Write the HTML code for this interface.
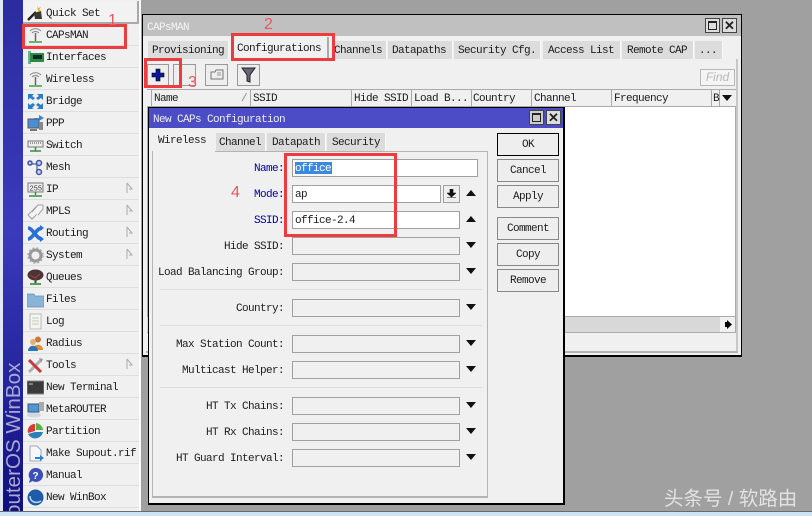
<!DOCTYPE html>
<html><head><meta charset="utf-8">
<style>
html,body{margin:0;padding:0;width:812px;height:516px;overflow:hidden;background:#a0a0a0}
div,span,svg{position:absolute;box-sizing:border-box}
.t{font:11px/14px "Liberation Mono",monospace;letter-spacing:-.6px;white-space:pre;color:#1c1c1c;margin-top:1px}
.m{left:46px}
.r{border-bottom:1px solid #dedede;left:23px;width:116px;height:22px}
.i{left:27px;width:17px;height:17px}
.a{left:126px;width:7px;height:12px}
.tab{background:#dcdcdc;border-right:1px solid #f8f8f8;height:18px}
.red{border:3px solid #ec3c40;z-index:20}
.n{font:16px/18px "Liberation Sans",sans-serif;color:#e8585c;z-index:21}
.f{background:#f0f0f0;border:1px solid #a0a0a0;height:18px;left:292px;width:168px}
.w{background:#fff}
.l{right:528px;text-align:right}
.b{color:#0000a8}
.d{left:466px;width:0;height:0;border-left:5px solid transparent;border-right:5px solid transparent;border-top:6px solid #111}
.u{left:466px;width:0;height:0;border-left:5px solid transparent;border-right:5px solid transparent;border-bottom:6px solid #111}
.btn{left:497px;width:62px;height:23px;background:#eee;border:1px solid #888;text-align:center;font:11px/23px "Liberation Mono",monospace;letter-spacing:-.6px;color:#1c1c1c}
.sep{left:160px;width:322px;height:1px;background:#dedede}
.h{top:90px;height:16px;border-right:1px solid #a8a8a8}
.wb{width:15px;height:15px;background:#ddd;border:1px solid #444}
</style></head><body>

<!-- sidebar -->
<div style="left:0;top:0;width:3px;height:512px;background:#dfe8f4"></div>
<div style="left:3px;top:0;width:20px;height:512px;background:linear-gradient(#2c2ca0,#3a3abc 45%,#24249c 75%,#10107e)"></div>
<div style="left:13px;top:516px;width:0;height:0"><span style="font:20.6px/24px 'Liberation Sans',sans-serif;color:#a9a9d2;left:0;top:0;white-space:pre;transform-origin:0 0;transform:rotate(-90deg) translate(0px,-11px)">outerOS WinBox</span></div>
<div style="left:23px;top:0;width:117px;height:512px;background:#f0f0f0"></div>
<div style="left:139px;top:0;width:2px;height:512px;background:#fafafa"></div>
<div style="left:23px;top:1px;width:116px;height:23px;border-right:2px solid #a8a8a8;border-bottom:2px solid #a8a8a8;background:#f2f2f2"></div>

<div class="r" style="top:24px"></div><div class="r" style="top:46px"></div><div class="r" style="top:68px"></div><div class="r" style="top:90px"></div><div class="r" style="top:112px"></div><div class="r" style="top:134px"></div><div class="r" style="top:156px"></div><div class="r" style="top:178px"></div><div class="r" style="top:200px"></div><div class="r" style="top:222px"></div><div class="r" style="top:244px"></div><div class="r" style="top:266px"></div><div class="r" style="top:288px"></div><div class="r" style="top:310px"></div><div class="r" style="top:332px"></div><div class="r" style="top:354px"></div><div class="r" style="top:376px"></div><div class="r" style="top:398px"></div><div class="r" style="top:420px"></div><div class="r" style="top:442px"></div><div class="r" style="top:464px"></div><div class="r" style="top:486px"></div>

<span class="t m" style="top:6px">Quick Set</span>
<span class="t m" style="top:28px">CAPsMAN</span>
<span class="t m" style="top:50px">Interfaces</span>
<span class="t m" style="top:72px">Wireless</span>
<span class="t m" style="top:94px">Bridge</span>
<span class="t m" style="top:116px">PPP</span>
<span class="t m" style="top:138px">Switch</span>
<span class="t m" style="top:160px">Mesh</span>
<span class="t m" style="top:182px">IP</span>
<span class="t m" style="top:204px">MPLS</span>
<span class="t m" style="top:226px">Routing</span>
<span class="t m" style="top:248px">System</span>
<span class="t m" style="top:270px">Queues</span>
<span class="t m" style="top:292px">Files</span>
<span class="t m" style="top:314px">Log</span>
<span class="t m" style="top:336px">Radius</span>
<span class="t m" style="top:358px">Tools</span>
<span class="t m" style="top:380px">New Terminal</span>
<span class="t m" style="top:402px">MetaROUTER</span>
<span class="t m" style="top:424px">Partition</span>
<span class="t m" style="top:446px">Make Supout.rif</span>
<span class="t m" style="top:468px">Manual</span>
<span class="t m" style="top:490px">New WinBox</span>

<!-- icons -->
<svg class="i" style="top:4px" viewBox="0 0 17 17"><path d="M1 16L9 8" stroke="#222" stroke-width="2.5"/><path d="M7 9l7-2 1 8H8z" fill="#3a3a30"/><path d="M10 1l1 3 3-1-2 3 3 1-4 1z" fill="#e8b030"/></svg>
<svg class="i" style="top:27px" viewBox="0 0 17 17"><path d="M3 4c3-3 8-3 11 0M5 6c2-2 5-2 7 0" stroke="#888" fill="none"/><path d="M8.5 6v8" stroke="#666" stroke-width="1.5"/><path d="M2 15h13" stroke="#3ca04c" stroke-width="1.5"/></svg>
<svg class="i" style="top:49px" viewBox="0 0 17 17"><rect x="1" y="2" width="3" height="13" fill="#70b0a0"/><rect x="3" y="4" width="14" height="9" fill="#2e8a3e"/><rect x="6" y="6" width="9" height="4" fill="#123"/></svg>
<svg class="i" style="top:71px" viewBox="0 0 17 17"><path d="M3 4c3-3 8-3 11 0M5 6c2-2 5-2 7 0" stroke="#888" fill="none"/><path d="M8.5 6v8" stroke="#666" stroke-width="1.5"/><path d="M2 15h13" stroke="#3ca04c" stroke-width="1.5"/></svg>
<svg class="i" style="top:93px" viewBox="0 0 17 17"><path d="M1 1h6L5 3l3 2-2 2-3-2-2 2zM16 1v6l-2-2-3 2-2-2 3-2-2-2zM1 16v-6l2 2 3-2 2 2-3 3 2 1zM16 16h-6l2-2-3-2 2-2 3 2 2-2z" fill="#2c7cc8"/></svg>
<svg class="i" style="top:115px" viewBox="0 0 17 17"><rect x="1" y="4" width="11" height="9" fill="#4a90d0" stroke="#556"/><rect x="12" y="7" width="4" height="8" fill="#888"/><path d="M7 3h5V0l5 3-5 3V4H7z" fill="#3c84d0"/><path d="M3 15h7" stroke="#777" stroke-width="2"/></svg>
<svg class="i" style="top:137px" viewBox="0 0 17 17"><rect x="1" y="4" width="15" height="6" fill="#eee" stroke="#777"/><path d="M3 6h1M5 6h1M7 6h1M9 6h1M11 6h1M13 6h1" stroke="#444"/><path d="M8.5 10v4M3 14h11" stroke="#3a8a4a" stroke-width="1.5"/></svg>
<svg class="i" style="top:159px" viewBox="0 0 17 17" fill="#c8d4f0" stroke="#4450a8" stroke-width="1.5"><path d="M5 5h6M10 5v8" fill="none" stroke="#6a78b8"/><circle cx="3" cy="4" r="2"/><circle cx="12" cy="4" r="2.5"/><circle cx="12" cy="13" r="2.5"/></svg>
<svg class="i" style="top:181px" viewBox="0 0 17 17"><rect x="1" y="2" width="15" height="9" fill="#eee" stroke="#777"/><text x="2.5" y="9.500" font-family="Liberation Mono" font-size="7" fill="#333">255</text><path d="M8.5 11v3M2 15h13" stroke="#3a8a4a" stroke-width="1.5"/></svg>
<svg class="i" style="top:203px" viewBox="0 0 17 17" fill="#f4f4f4" stroke="#a0a0a0"><path d="M1 12L9 4h4v4l-8 8z"/><path d="M5 9l6-7h5v4l-5 6"/></svg>
<svg class="i" style="top:225px" viewBox="0 0 17 17"><path d="M1 3c5 0 8 11 14 11M1 14c5 0 8-11 14-11" stroke="#2a70d8" stroke-width="3.5" fill="none"/><path d="M13 0l4 3-4 3zM13 11l4 3-4 3z" fill="#2a70d8"/></svg>
<svg class="i" style="top:247px" viewBox="0 0 17 17"><circle cx="8.5" cy="8.5" r="5.5" fill="none" stroke="#999" stroke-width="3"/><circle cx="8.5" cy="8.5" r="7.5" fill="none" stroke="#aaa" stroke-width="1.5" stroke-dasharray="2 2"/></svg>
<svg class="i" style="top:269px" viewBox="0 0 17 17"><ellipse cx="8.5" cy="6" rx="8" ry="5.5" fill="#4a3438"/><path d="M3 6l5 3 5-4" stroke="#b04040" fill="none"/><path d="M8.5 9v5" stroke="#5a4030" stroke-width="2"/><path d="M3 15h11" stroke="#48a848" stroke-width="2"/></svg>
<svg class="i" style="top:291px" viewBox="0 0 17 17"><path d="M0 3h7l1 2h9v11H0z" fill="#88b4d8" stroke="#6a90b0" stroke-width=".7"/></svg>
<svg class="i" style="top:313px" viewBox="0 0 17 17"><rect x="3" y="1" width="11" height="15" fill="#f6f6f0" stroke="#bbb"/><path d="M5 5h7M5 8h7M5 11h7" stroke="#b8ccb8"/></svg>
<svg class="i" style="top:335px" viewBox="0 0 17 17"><circle cx="11" cy="4.500" r="3" fill="#c87838"/><path d="M6 15c0-7 10-7 10 0z" fill="#e09030"/><circle cx="6" cy="7" r="3" fill="#e8b070"/><path d="M1 16c0-7 10-7 10 0z" fill="#2878b8"/></svg>
<svg class="i" style="top:357px" viewBox="0 0 17 17"><path d="M2 15L14 3" stroke="#b0b0b0" stroke-width="3"/><path d="M2 3l12 12" stroke="#c83838" stroke-width="3"/><path d="M12 1l4 1-2 4z" fill="#999"/></svg>
<svg class="i" style="top:379px" viewBox="0 0 17 17"><rect y="2" width="17" height="13" fill="#3a3a3a" stroke="#888"/><path d="M2 5h4" stroke="#ccc"/></svg>
<svg class="i" style="top:401px" viewBox="0 0 17 17"><rect x="1" y="3" width="11" height="8" fill="#4a98d8" stroke="#456"/><rect x="12" y="1" width="5" height="9" fill="#aaa"/><ellipse cx="7" cy="14" rx="7" ry="2.5" fill="#ccd8e8"/></svg>
<svg class="i" style="top:423px" viewBox="0 0 17 17"><path d="M8 8V1a7 7 0 0 0-7 9z" fill="#d83a3a"/><path d="M9 7V0a8 8 0 0 1 7 7z" fill="#5ab040"/><path d="M1 11l7-2h8a8 8 0 0 1-15 2z" fill="#2a80b8"/></svg>
<svg class="i" style="top:445px" viewBox="0 0 17 17"><path d="M3 1h7l4 4v11H3z" fill="#f4f6fa" stroke="#9ab"/><path d="M8 12h5v-2l4 3-4 3v-2H8z" fill="#2c80d0"/></svg>
<svg class="i" style="top:467px" viewBox="0 0 17 17"><path d="M8.5 1a7 7 0 1 1-3 13L2 16l1-4a7 7 0 0 1 5.500-11z" fill="#3a50b8"/><text x="5.5" y="12" font-family="Liberation Sans" font-size="10" font-weight="bold" fill="#fff">?</text></svg>
<svg class="i" style="top:489px" viewBox="0 0 17 17"><circle cx="8.5" cy="8.5" r="8" fill="#1e5ca8"/><path d="M3 7c0 6 6 8 11 5" stroke="#bcd8f0" stroke-width="1.5" fill="none"/></svg>

<svg class="a" style="top:182px" viewBox="0 0 7 12"><path d="M1 1v10M1 1l5 6-3 0" fill="none" stroke="#aaa"/></svg>
<svg class="a" style="top:204px" viewBox="0 0 7 12"><path d="M1 1v10M1 1l5 6-3 0" fill="none" stroke="#aaa"/></svg>
<svg class="a" style="top:226px" viewBox="0 0 7 12"><path d="M1 1v10M1 1l5 6-3 0" fill="none" stroke="#aaa"/></svg>
<svg class="a" style="top:248px" viewBox="0 0 7 12"><path d="M1 1v10M1 1l5 6-3 0" fill="none" stroke="#aaa"/></svg>
<svg class="a" style="top:358px" viewBox="0 0 7 12"><path d="M1 1v10M1 1l5 6-3 0" fill="none" stroke="#aaa"/></svg>

<!-- CAPsMAN window -->
<div style="left:142px;top:14px;width:600px;height:343px;background:#f0f0f0;border:1px solid #000;border-bottom-width:2px"></div>
<div style="left:143px;top:15px;width:598px;height:21px;background:#c0c0c0"></div>
<span class="t" style="left:147px;top:20px;color:#f4f4f4">CAPsMAN</span>
<div class="wb" style="left:705px;top:18px"></div><div style="left:708px;top:21px;width:9px;height:9px;border:1px solid #222;border-top-width:2px"></div>
<div class="wb" style="left:722px;top:18px;font:bold 13px/13px 'Liberation Sans';text-align:center;color:#222">✕</div>

<div class="tab" style="left:148px;top:41px;width:81px"></div><span class="t" style="left:152px;top:43px">Provisioning</span>
<div class="tab" style="left:332px;top:41px;width:55px"></div><span class="t" style="left:334px;top:43px">Channels</span>
<div class="tab" style="left:388px;top:41px;width:65px"></div><span class="t" style="left:392px;top:43px">Datapaths</span>
<div class="tab" style="left:454px;top:41px;width:87px"></div><span class="t" style="left:458px;top:43px">Security Cfg.</span>
<div class="tab" style="left:543px;top:41px;width:78px"></div><span class="t" style="left:548px;top:43px">Access List</span>
<div class="tab" style="left:622px;top:41px;width:72px"></div><span class="t" style="left:627px;top:43px">Remote CAP</span>
<div class="tab" style="left:695px;top:41px;width:28px"></div><span class="t" style="left:699px;top:43px">...</span>
<div style="left:231px;top:37px;width:98px;height:23px;background:#f0f0f0;border-right:2px solid #aaa"></div><span class="t" style="left:237px;top:41px">Configurations</span>
<div style="left:736px;top:59px;width:2px;height:293px;background:#c8c8c8"></div>
<div style="left:146px;top:351px;width:592px;height:2px;background:#b4b4b4"></div>

<!-- toolbar -->
<div style="left:147px;top:64px;width:22px;height:22px;background:#eee;border:1px solid #999"></div>
<svg style="left:151px;top:68px;width:14px;height:14px" viewBox="0 0 14 14"><path d="M5 1h4v4h4v4H9v4H5V9H1V5h4z" fill="#0a1a9c" stroke="#000" stroke-width=".6"/></svg>
<div style="left:173px;top:64px;width:23px;height:22px;background:#eee;border:1px solid #999"></div>
<div style="left:205px;top:64px;width:23px;height:22px;background:#eee;border:1px solid #999"></div>
<svg style="left:210px;top:69px;width:14px;height:12px" viewBox="0 0 14 12"><path d="M1 3h4l1-2h7v9H1z" fill="none" stroke="#777"/><path d="M7 4h4M7 6h4" stroke="#999"/></svg>
<div style="left:237px;top:64px;width:23px;height:22px;background:#eee;border:1px solid #999"></div>
<svg style="left:241px;top:67px;width:15px;height:16px" viewBox="0 0 15 16"><path d="M1 1h13L9 8v7l-3-1V8z" fill="#667" stroke="#222"/></svg>
<div style="left:700px;top:69px;width:35px;height:17px;background:#f4f4f4;border:1px solid #b8b8b8;font:italic 12px/15px 'Liberation Sans',sans-serif;color:#b8b8b8;text-align:center">Find</div>

<!-- table -->
<div style="left:147px;top:89px;width:589px;height:18px;background:#f0f0f0;border-top:1px solid #aaa;border-bottom:1px solid #aaa"></div>
<div class="h" style="left:147px;width:5px"></div><div class="h" style="left:152px;width:99px"></div><div class="h" style="left:251px;width:101px"></div><div class="h" style="left:352px;width:60px"></div><div class="h" style="left:412px;width:60px"></div><div class="h" style="left:472px;width:60px"></div><div class="h" style="left:532px;width:80px"></div><div class="h" style="left:612px;width:100px"></div><div class="h" style="left:712px;width:8px"></div>
<span class="t" style="left:154px;top:91px">Name</span><span class="t" style="left:241px;top:91px;color:#888">/</span>
<span class="t" style="left:253px;top:91px">SSID</span><span class="t" style="left:354px;top:91px">Hide SSID</span><span class="t" style="left:414px;top:91px">Load B...</span><span class="t" style="left:473px;top:91px">Country</span><span class="t" style="left:534px;top:91px">Channel</span><span class="t" style="left:614px;top:91px">Frequency</span><span class="t" style="left:713px;top:91px">B</span>
<div class="d" style="left:722px;top:95px"></div>
<div style="left:147px;top:107px;width:589px;height:209px;background:#fff;border-left:1px solid #aaa;border-right:1px solid #aaa"></div>
<div style="left:147px;top:316px;width:589px;height:17px;background:#d8d8d8;border-top:1px solid #aaa;border-bottom:1px solid #aaa;border-right:1px solid #aaa"></div>
<div style="left:720px;top:317px;width:15px;height:15px;background:#f0f0f0"></div>
<svg style="left:724px;top:320px;width:8px;height:9px" viewBox="0 0 8 9"><path d="M1 2h2V0l5 4.500L3 9V7H1z" fill="#000"/></svg>

<!-- dialog -->
<div style="left:148px;top:107px;width:417px;height:398px;background:#f0f0f0;border:1px solid #000;border-width:1px 2px 2px 1px;z-index:1"></div>
<div style="z-index:2;left:0;top:0;width:812px;height:516px">
<div style="left:149px;top:108px;width:414px;height:20px;background:#4c4cc6"></div>
<span class="t" style="left:153px;top:112px;color:#eee">New CAPs Configuration</span>
<div class="wb" style="left:529px;top:110px;background:#ccc"></div><div style="left:532px;top:113px;width:9px;height:9px;border:1px solid #222;border-top-width:2px"></div>
<div class="wb" style="left:546px;top:110px;font:bold 13px/13px 'Liberation Sans';text-align:center;color:#222;background:#ddd">✕</div>

<div style="left:152px;top:151px;width:336px;height:347px;border:1px solid #b4b4b4;border-width:1px 1px 2px 1px"></div>
<div class="tab" style="left:216px;top:133px;width:50px"></div><span class="t" style="left:219px;top:135px">Channel</span>
<div class="tab" style="left:267px;top:133px;width:59px"></div><span class="t" style="left:272px;top:135px">Datapath</span>
<div class="tab" style="left:327px;top:133px;width:59px"></div><span class="t" style="left:332px;top:135px">Security</span>
<div style="left:153px;top:130px;width:62px;height:23px;background:#f0f0f0"></div><span class="t" style="left:158px;top:133px">Wireless</span>

<span class="t l b" style="top:161px">Name:</span>
<span class="t l b" style="top:187px">Mode:</span>
<span class="t l b" style="top:213px">SSID:</span>
<span class="t l" style="top:239px">Hide SSID:</span>
<span class="t l" style="top:265px">Load Balancing Group:</span>
<span class="t l" style="top:301px">Country:</span>
<span class="t l" style="top:337px">Max Station Count:</span>
<span class="t l" style="top:363px">Multicast Helper:</span>
<span class="t l" style="top:399px">HT Tx Chains:</span>
<span class="t l" style="top:425px">HT Rx Chains:</span>
<span class="t l" style="top:451px">HT Guard Interval:</span>

<div class="f w" style="top:159px;width:186px"></div>
<div style="left:295px;top:162px;width:37px;height:12px;background:#3a88e0"></div>
<span class="t" style="left:295px;top:161px;color:#fff">office</span>
<div class="f w" style="top:185px;width:149px"></div><span class="t" style="left:295px;top:187px">ap</span>
<div style="left:443px;top:185px;width:17px;height:18px;background:#eee;border:1px solid #a0a0a0"></div>
<svg style="left:447px;top:189px;width:9px;height:10px" viewBox="0 0 9 10"><path d="M3 0h3v4h3L4.500 8 0 4h3zM0 8.500h9" fill="#111" stroke="#111" stroke-width=".6"/></svg>
<div class="u" style="top:190px"></div>
<div class="f w" style="top:211px"></div><span class="t" style="left:295px;top:213px">office-2.4</span>
<div class="u" style="top:216px"></div>
<div class="f" style="top:237px"></div><div class="d" style="top:242px"></div>
<div class="f" style="top:263px"></div><div class="d" style="top:268px"></div>
<div class="sep" style="top:289px"></div>
<div class="f" style="top:299px"></div><div class="d" style="top:304px"></div>
<div class="sep" style="top:325px"></div>
<div class="f" style="top:335px"></div><div class="d" style="top:340px"></div>
<div class="f" style="top:361px"></div><div class="d" style="top:366px"></div>
<div class="sep" style="top:387px"></div>
<div class="f" style="top:397px"></div><div class="d" style="top:402px"></div>
<div class="f" style="top:423px"></div><div class="d" style="top:428px"></div>
<div class="f" style="top:449px"></div><div class="d" style="top:454px"></div>

<div class="btn" style="top:133px;border-color:#000">OK</div>
<div class="btn" style="top:159px">Cancel</div>
<div class="btn" style="top:185px">Apply</div>
<div class="btn" style="top:217px">Comment</div>
<div class="btn" style="top:243px">Copy</div>
<div class="btn" style="top:269px">Remove</div>
</div>

<!-- annotations -->
<div class="red" style="left:22px;top:24px;width:105px;height:25px"></div>
<div class="red" style="left:231px;top:33px;width:104px;height:28px"></div>
<div class="red" style="left:144px;top:58px;width:38px;height:30px"></div>
<div class="red" style="left:284px;top:153px;width:113px;height:84px"></div>
<span class="n" style="left:108px;top:12px">1</span>
<span class="n" style="left:264px;top:16px">2</span>
<span class="n" style="left:188px;top:74px">3</span>
<span class="n" style="left:231px;top:184px">4</span>

<!-- bottom -->
<div style="left:0;top:511px;width:812px;height:1px;background:#6a6a6a;z-index:5"></div>
<div style="left:0;top:512px;width:812px;height:4px;background:#cde3f7;z-index:5"></div>
<span style="left:664px;top:486px;font:19.5px/26px 'Liberation Sans','Noto Sans CJK SC',sans-serif;color:#e2e2e2;white-space:pre;z-index:6">头条号 / 软路由</span>
</body></html>
